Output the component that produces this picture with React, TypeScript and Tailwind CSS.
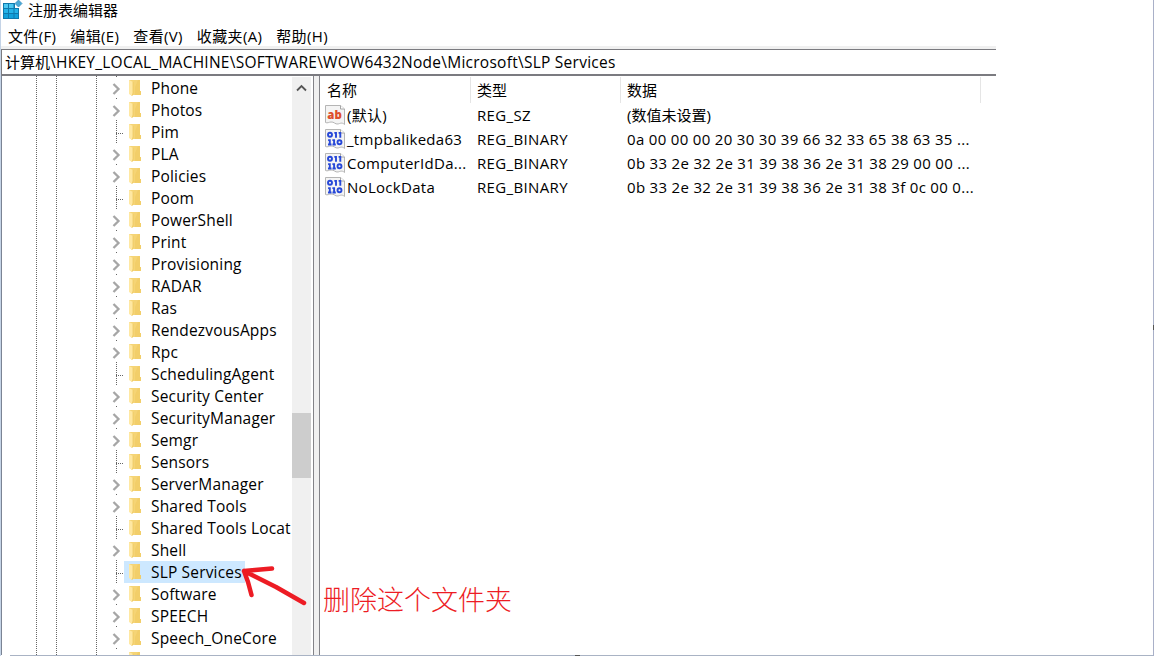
import React, { useState } from "react"

const MENUS = ["文件(F)", "编辑(E)", "查看(V)", "收藏夹(A)", "帮助(H)"]

const KEYS = [
    { name: "Phone", children: true },
    { name: "Photos", children: true },
    { name: "Pim", children: false },
    { name: "PLA", children: true },
    { name: "Policies", children: true },
    { name: "Poom", children: false },
    { name: "PowerShell", children: true },
    { name: "Print", children: true },
    { name: "Provisioning", children: true },
    { name: "RADAR", children: true },
    { name: "Ras", children: true },
    { name: "RendezvousApps", children: true },
    { name: "Rpc", children: true },
    { name: "SchedulingAgent", children: false },
    { name: "Security Center", children: true },
    { name: "SecurityManager", children: true },
    { name: "Semgr", children: true },
    { name: "Sensors", children: false },
    { name: "ServerManager", children: true },
    { name: "Shared Tools", children: true },
    { name: "Shared Tools Locat", children: false },
    { name: "Shell", children: true },
    { name: "SLP Services", children: false },
    { name: "Software", children: true },
    { name: "SPEECH", children: true },
    { name: "Speech_OneCore", children: true },
    { name: "", children: true },
]

const VALUES = [
    { name: "(默认)", type: "REG_SZ", data: "(数值未设置)" },
    { name: "_tmpbalikeda63", type: "REG_BINARY", data: "0a 00 00 00 20 30 30 39 66 32 33 65 38 63 35 ..." },
    { name: "ComputerIdDa...", type: "REG_BINARY", data: "0b 33 2e 32 2e 31 39 38 36 2e 31 38 29 00 00 ..." },
    { name: "NoLockData", type: "REG_BINARY", data: "0b 33 2e 32 2e 31 39 38 36 2e 31 38 3f 0c 00 0..." },
]

const RegeditIcon = () => (
    <svg width="20" height="20" viewBox="0 0 20 20" className="shrink-0">
        <path d="M0 3H12V8H16V19H0Z" fill="#0f79ad" />
        <path d="M1 4H5V8H1ZM6 4H10.500V8H6Z" fill="#4cc8f2" />
        <path d="M1 9H5V13H1ZM6 9H10.500V13H6ZM11.500 9H15V13H11.500Z" fill="#25b3e8" />
        <path d="M1 14H5V18H1ZM6 14H10.500V18H6ZM11.500 14H15V18H11.500Z" fill="#12a0da" />
        <path d="M15.500 0L19 3.500L15.500 7L12 3.500Z" fill="#4aa9d6" stroke="#3a8fbf" strokeWidth="0.8" />
    </svg>
)

const FolderIcon = () => (
    <svg width="14" height="18" viewBox="0 0 14 18" className="shrink-0">
        <path d="M1 1H11V12H12V16H2L0 14V1Z" fill="#f5d475" />
        <path d="M9 1H11V12H12V16H6V8Z" fill="#f0ca60" opacity="0.6" />
        <path d="M0 1L4 3V14L3 17L0 15Z" fill="#ffe8a2" />
        <path d="M4 3V14L3 17" fill="none" stroke="#edc65c" strokeWidth="0.7" />
    </svg>
)

const ValueIcon: React.FC<{ text: boolean }> = ({ text }) => (
    <svg width="20" height="20" viewBox="0 0 20 20" className="shrink-0">
        <path d="M0.500 0.500H15.500L19.500 4V19.500C17 17 15 18.500 13 19C10 19.500 9 16.500 6 17C4 17 2.500 18.500 0.500 17.500Z" fill="#f4f4f4" stroke="#b5b5b5" />
        <path d="M15.500 0.500V4H19.500" fill="#fff" stroke="#a5a5a5" />
        {text ? (
            <text x="9.700" y="13.500" textAnchor="middle" textLength="15" lengthAdjust="spacingAndGlyphs" fontFamily="Open Sans, sans-serif" fontSize="13" fontWeight="800" fill="#de4f2c">ab</text>
        ) : (
            <g fill="none" stroke="#2748d8" strokeWidth="1.900">
                <ellipse cx="5" cy="5.800" rx="2" ry="2" />
                <path d="M11 3V8.800M15.300 3V8.800M9.300 3.900H11M13.600 3.900H15.300" />
                <path d="M4.800 10.200V16M9.100 10.200V16M3.100 11.100H4.800M7.400 11.100H9.100M3 15.500H6.500M7.500 15.500H10.800" />
                <ellipse cx="14.500" cy="13.200" rx="2" ry="2" />
            </g>
        )}
    </svg>
)

const Guide = () => (
    <div className="w-px h-full bg-[repeating-linear-gradient(to_bottom,#666_0_1px,transparent_1px_2px)]" />
)

const App: React.FC = () => {
    const [selected, setSelected] = useState("SLP Services")
    return (
        <div className="relative flex flex-col w-[1154px] h-[656px] overflow-hidden bg-white text-black text-[15px] font-['Open_Sans','Noto_Sans_CJK_SC',sans-serif] whitespace-pre cursor-default">
            <div className="flex items-center h-[19px] pl-[3px] gap-[5px] leading-[18px]">
                <RegeditIcon />
                <p>注册表编辑器</p>
            </div>
            <div className="flex items-center h-[27px] pt-[7px] pl-2 leading-[20px] gap-[14px] tracking-[0.35px]">
                {MENUS.map((menu) => (
                    <p key={menu}>{menu}</p>
                ))}
            </div>
            <div className="w-[996px] h-[3px] bg-[#f0f0f0]" />
            <div className="flex items-center ml-px w-[995px] h-[27px] border-t border-b-2 border-l border-[#7b7b80] pl-[3px] leading-[24px]">
                <p className="w-[45px]">计算机</p>
                <p className="text-[15.5px] tracking-[0.26px]">\HKEY_LOCAL_MACHINE\SOFTWARE\WOW6432Node\Microsoft\SLP Services</p>
            </div>
            <div className="flex h-[579px] ml-px border-l border-[#7b8494]">
                <div className="flex w-[290px] h-full overflow-hidden">
                    <div className="flex w-[114px] h-full shrink-0 pl-[34px]">
                        <Guide />
                        <div className="w-[19px]" />
                        <Guide />
                        <div className="w-[39px]" />
                        <Guide />
                    </div>
                    <div className="relative w-[176px] pt-px text-[15.5px] tracking-[0.17px]">
                        <div className="absolute left-0 top-0 h-full">
                            <Guide />
                        </div>
                        {KEYS.map((key) => (
                            <div key={key.name} onClick={() => setSelected(key.name)} className="relative flex items-center h-[22px] leading-[22px]">
                                <div className="w-[8px] shrink-0">
                                    {key.children ? (
                                        <svg width="11" height="20" viewBox="0 0 11 20" className="relative -left-[5px] bg-white max-w-none">
                                            <path d="M2.500 6L7.500 11L2.500 16" fill="none" stroke="#a6a6a6" strokeWidth="2.300" />
                                        </svg>
                                    ) : (
                                        <div className="w-[8px] h-px mt-[2px] bg-[repeating-linear-gradient(to_right,#666_0_1px,transparent_1px_2px)]" />
                                    )}
                                </div>
                                <div className={`flex items-center h-full pl-[5px] gap-[8px] ${key.name === selected ? "bg-[#cde8ff] w-[121px]" : ""}`}>
                                    <FolderIcon />
                                    <p>{key.name}</p>
                                </div>
                            </div>
                        ))}
                    </div>
                </div>
                <div className="flex flex-col w-[19px] mt-px bg-[#f0f0f0]">
                    <svg width="19" height="22" viewBox="0 0 19 22">
                        <path d="M5 13.500L9.500 9L14 13.500" fill="none" stroke="#555" strokeWidth="1.800" />
                    </svg>
                    <div className="mt-[314px] h-[65px] bg-[#cdcdcd]" />
                </div>
                <div className="w-[7px] h-full ml-[2px] shrink-0 bg-[#f0f0f0] border-x border-[#838388]" />
                <div className="flex-1">
                    <div className="flex h-[27px] pt-px leading-[27px]">
                        <p className="w-[151px] pl-[7px] border-r border-[#e5e5e5]">名称</p>
                        <p className="w-[150px] pl-[6px] border-r border-[#e5e5e5]">类型</p>
                        <p className="w-[360px] pl-[6px] border-r border-[#e5e5e5]">数据</p>
                    </div>
                    {VALUES.map((value, index) => (
                        <div key={value.name} className="flex items-center h-[24px] leading-[24px]">
                            <div className="flex items-center w-[151px] pl-[5px] gap-[2px] tracking-[0.3px]">
                                <ValueIcon text={index === 0} />
                                <p>{value.name}</p>
                            </div>
                            <p className="w-[150px] pl-[6px] tracking-[0.35px]">{value.type}</p>
                            <p className={index === 0 ? "pl-[6px]" : "pl-[6px] tracking-[0.32px]"}>{value.data}</p>
                        </div>
                    ))}
                </div>
            </div>
            <div className="h-px ml-[10px] pl-[565px] bg-[#a9b3c4]">
                <div className="w-[5px] h-px bg-[#555]" />
            </div>

            {/* right window edge */}
            <div className="absolute right-0 top-0 w-px h-full pt-[325px] bg-[#a9b0c8]">
                <div className="h-[5px] bg-[#555]" />
            </div>
            <div className="absolute left-0 top-0 w-px h-full bg-[#c4d3e6]" />

            {/* red note */}
            <svg width="70" height="46" viewBox="0 0 70 46" className="absolute left-[240px] top-[562px]">
                <path d="M64 41Q50 33 36 25Q20 17 4 9M4 9L15 8L32 6.500M4 9L8 20L11.500 33" fill="none" stroke="#ed1c24" strokeWidth="4.500" strokeLinecap="round" strokeLinejoin="round" />
            </svg>
            <p className="absolute left-[323px] top-[583px] text-[27px] leading-[32px] font-light text-[#ed1c24] font-['Noto_Sans_CJK_SC',sans-serif]">删除这个文件夹</p>
        </div>
    )
}
export default App
